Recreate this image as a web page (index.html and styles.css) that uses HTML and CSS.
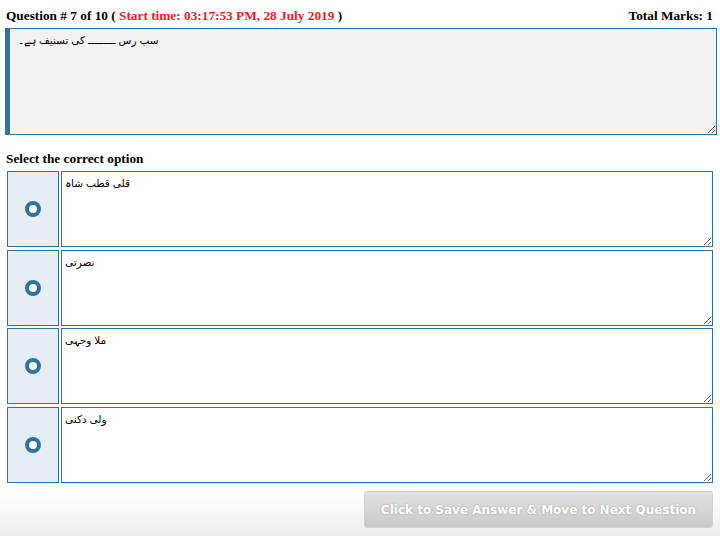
FILE: index.html
```html
<!DOCTYPE html>
<html lang="en">
<head>
    <meta charset="UTF-8">
    <meta name="viewport" content="width=device-width, initial-scale=1.0">
    <title>Quiz Question</title>
    <link rel="stylesheet" href="styles.css">
</head>
<body>

    <!-- Question header -->
    <div class="quiz-header">
        <span>Question # 7 of 10 ( <span class="start-time">Start time: 03:17:53 PM, 28 July 2019</span> )</span>
        <span>Total Marks: 1</span>
    </div>

    <textarea class="question-text" readonly>سب رس ـــــــــ کی تسنیف ہے۔</textarea>

    <h4 class="options-title">Select the correct option</h4>

    <div class="options">
        <div class="option-row">
            <label class="option-radio"><input type="radio" name="answer"><span class="radio-mark"></span></label>
            <textarea class="option-text" readonly>قلی قطب شاہ</textarea>
        </div>
        <div class="option-row">
            <label class="option-radio"><input type="radio" name="answer"><span class="radio-mark"></span></label>
            <textarea class="option-text" readonly>نصرتی</textarea>
        </div>
        <div class="option-row">
            <label class="option-radio"><input type="radio" name="answer"><span class="radio-mark"></span></label>
            <textarea class="option-text" readonly>ملا وجہی</textarea>
        </div>
        <div class="option-row">
            <label class="option-radio"><input type="radio" name="answer"><span class="radio-mark"></span></label>
            <textarea class="option-text" readonly>ولی دکنی</textarea>
        </div>
    </div>

    <!-- Save button -->
    <div class="actions">
        <button class="btn-save" disabled>Click to Save Answer &amp; Move to Next Question</button>
    </div>

</body>
</html>
```

FILE: styles.css
```css
/* General Styling */
* {
    box-sizing: border-box;
    margin: 0;
    padding: 0;
}

body {
    font-family: "Liberation Serif", "Times New Roman", serif;
    background: #fff;
    color: #000;
}

/* Header line */
.quiz-header {
    display: flex;
    justify-content: space-between;
    padding: 7px 7px 0 6px;
    font-size: 13.3px;
    font-weight: bold;
    line-height: 17px;
}

.start-time {
    color: #ee1c1c;
}

/* Question box */
.question-text {
    display: block;
    width: 712px;
    height: 107px;
    margin: 4px 0 0 5px;
    padding: 3px 8px;
    background: #f2f2f2;
    border: 1px solid #2c73a0;
    border-left: 5px solid #2c73a0;
    font-family: Arial, "Liberation Sans", "DejaVu Sans", sans-serif;
    font-size: 10.5px;
    line-height: 16px;
    color: #000;
    outline: none;
}

.options-title {
    font-size: 13.3px;
    margin: 15px 0 0 6px;
    line-height: 17px;
}

/* Answer options */
.options {
    display: flex;
    flex-direction: column;
    gap: 2.7px;
    margin: 4px 0 0 7px;
}

.option-row {
    display: flex;
    gap: 2px;
    height: 76px;
}

.option-radio {
    width: 52px;
    flex-shrink: 0;
    display: flex;
    align-items: center;
    justify-content: center;
    background: #e6edf6;
    border: 1px solid #2c73a0;
    cursor: pointer;
}

.option-radio input {
    display: none;
}

.radio-mark {
    width: 16px;
    height: 16px;
    border: 4px solid #2c73a0;
    border-radius: 50%;
    background: #fff;
}

.option-text {
    width: 652px;
    height: 100%;
    padding: 3px 3px;
    border: 1px solid #2c73a0;
    font-family: Arial, "Liberation Sans", "DejaVu Sans", sans-serif;
    font-size: 10.5px;
    line-height: 16px;
    color: #000;
    outline: none;
}

/* Button bar */
.actions {
    display: flex;
    justify-content: flex-end;
    margin-top: 5px;
    padding: 3px 7px 9px 0;
    background: linear-gradient(to bottom, #fff 0%, #fafafa 40%, #ebebeb 100%);
}

.btn-save {
    width: 349px;
    height: 37px;
    font-family: Verdana, "DejaVu Sans", sans-serif;
    font-size: 12px;
    font-weight: bold;
    color: #fff;
    text-shadow: 0 0 2px #9a9a9a;
    background: linear-gradient(to bottom, #e2e2e2, #c9c9c9);
    border: 1px solid #d0d0d0;
    border-radius: 3px;
    cursor: default;
}
```
